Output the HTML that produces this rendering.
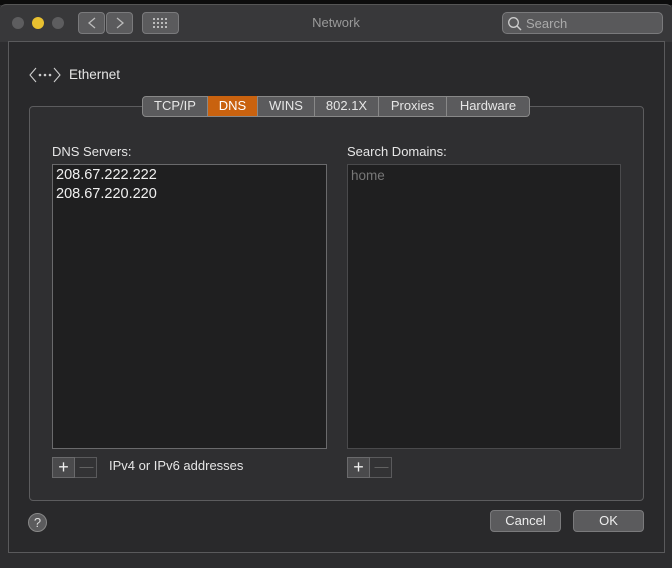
<!DOCTYPE html>
<html><head><style>
*{margin:0;padding:0;box-sizing:border-box}
body{width:672px;height:568px;background:#2d2d2f;font-family:"Liberation Sans",sans-serif;position:relative;overflow:hidden;color:#ddd}
.a{position:absolute}
.btn{position:absolute;background:#5b5b5d;border:1px solid #7a7a7c;border-radius:4px}
.tab{position:absolute;top:96px;height:20px;border-right:1px solid #888;font-size:13px;color:#e6e6e6;text-align:center;line-height:19px}
</style></head><body>
<div class="a" style="left:0;top:0;width:672px;height:5px;background:#0c0c0c"></div>
<div class="a" style="left:0;top:4px;width:672px;height:38px;background:#38383a;border-radius:6px 6px 0 0;border-top:1px solid #555"></div>
<div class="a" style="left:12px;top:17px;width:12px;height:12px;border-radius:50%;background:#5d5d5f"></div>
<div class="a" style="left:32px;top:17px;width:12px;height:12px;border-radius:50%;background:#e8c030"></div>
<div class="a" style="left:52px;top:17px;width:12px;height:12px;border-radius:50%;background:#5d5d5f"></div>
<div class="btn" style="left:78px;top:12px;width:27px;height:22px"></div>
<div class="btn" style="left:106px;top:12px;width:27px;height:22px"></div>
<svg class="a" style="left:78px;top:12px" width="56" height="22"><path d="M17 6 L11 11 L17 16" stroke="#bbb" fill="none" stroke-width="1.3"/><path d="M39 6 L45 11 L39 16" stroke="#bbb" fill="none" stroke-width="1.3"/></svg>
<div class="btn" style="left:142px;top:12px;width:37px;height:22px"></div>
<svg class="a" style="left:152px;top:17px" width="18" height="12"><g fill="#bbb"><rect x="1" y="1" width="2" height="2"/><rect x="5" y="1" width="2" height="2"/><rect x="9" y="1" width="2" height="2"/><rect x="13" y="1" width="2" height="2"/><rect x="1" y="5" width="2" height="2"/><rect x="5" y="5" width="2" height="2"/><rect x="9" y="5" width="2" height="2"/><rect x="13" y="5" width="2" height="2"/><rect x="1" y="9" width="2" height="2"/><rect x="5" y="9" width="2" height="2"/><rect x="9" y="9" width="2" height="2"/><rect x="13" y="9" width="2" height="2"/></g></svg>
<div class="a" style="left:0;top:15px;width:672px;text-align:center;font-size:13px;color:#9a9a9a">Network</div>
<div class="btn" style="left:502px;top:12px;width:161px;height:22px;background:#59595b;border-radius:5px"></div>
<svg class="a" style="left:507px;top:16px" width="16" height="16"><circle cx="6.5" cy="6.5" r="4.8" stroke="#ccc" fill="none" stroke-width="1.3"/><path d="M10 10 L14 14" stroke="#ccc" stroke-width="1.5"/></svg>
<div class="a" style="left:526px;top:16px;font-size:13px;color:#aaa">Search</div>
<div class="a" style="left:8px;top:41px;width:657px;height:512px;background:#29292b;border:1px solid #5a5a5c"></div>
<svg class="a" style="left:28px;top:66px" width="34" height="20"><path d="M8 2 L2 9 L8 16 M26 2 L32 9 L26 16" stroke="#ccc" fill="none" stroke-width="1.1"/><circle cx="12" cy="9" r="1.3" fill="#ccc"/><circle cx="17" cy="9" r="1.3" fill="#ccc"/><circle cx="22" cy="9" r="1.3" fill="#ccc"/></svg>
<div class="a" style="left:69px;top:67px;font-size:13.5px;color:#e6e6e6">Ethernet</div>
<div class="a" style="left:29px;top:106px;width:615px;height:395px;background:#2f2f31;border:1px solid #5c5c5e;border-radius:4px"></div>
<div class="a" style="left:142px;top:96px;width:388px;height:21px;background:#5b5b5d;border:1px solid #888;border-radius:4px"></div>
<div class="tab" style="left:143px;width:65px">TCP/IP</div>
<div class="tab" style="left:208px;width:50px;background:#c9620f;color:#fff">DNS</div>
<div class="tab" style="left:258px;width:57px">WINS</div>
<div class="tab" style="left:315px;width:64px">802.1X</div>
<div class="tab" style="left:379px;width:68px">Proxies</div>
<div class="tab" style="left:447px;width:82px;border-right:none">Hardware</div>
<div class="a" style="left:52px;top:144px;font-size:13px;color:#e6e6e6">DNS Servers:</div>
<div class="a" style="left:347px;top:144px;font-size:13px;color:#e6e6e6">Search Domains:</div>
<div class="a" style="left:52px;top:164px;width:275px;height:285px;background:#1f1f20;border:1px solid #6a6a6c;padding:1px 0 0 3px;font-size:14.5px;line-height:19px;color:#f0f0f0">208.67.222.222<br>208.67.220.220</div>
<div class="a" style="left:347px;top:164px;width:274px;height:285px;background:#1f1f20;border:1px solid #4a4a4c;padding:1px 0 0 3px;font-size:13.5px;line-height:19px;color:#777">home</div>
<div class="a" style="left:52px;top:457px;width:45px;height:21px;border:1px solid #5a5a5c;background:#333335"></div>
<div class="a" style="left:52px;top:457px;width:23px;height:21px;border:1px solid #6a6a6c;background:#4a4a4c;text-align:center;font-size:18px;line-height:19px;color:#eee">+</div>
<div class="a" style="left:76px;top:457px;width:21px;height:21px;text-align:center;font-size:14px;line-height:19px;color:#666">—</div>
<div class="a" style="left:109px;top:458px;font-size:13px;color:#e6e6e6">IPv4 or IPv6 addresses</div>
<div class="a" style="left:347px;top:457px;width:45px;height:21px;border:1px solid #5a5a5c;background:#333335"></div>
<div class="a" style="left:347px;top:457px;width:23px;height:21px;border:1px solid #6a6a6c;background:#4a4a4c;text-align:center;font-size:18px;line-height:19px;color:#eee">+</div>
<div class="a" style="left:371px;top:457px;width:21px;height:21px;text-align:center;font-size:14px;line-height:19px;color:#666">—</div>
<div class="a" style="left:28px;top:513px;width:19px;height:19px;border-radius:50%;background:#5b5b5d;border:1px solid #888;text-align:center;font-size:13px;line-height:17px;color:#ddd">?</div>
<div class="btn" style="left:490px;top:510px;width:71px;height:22px;text-align:center;font-size:13px;line-height:20px;color:#eee">Cancel</div>
<div class="btn" style="left:573px;top:510px;width:71px;height:22px;text-align:center;font-size:13px;line-height:20px;color:#eee">OK</div>
</body></html>
